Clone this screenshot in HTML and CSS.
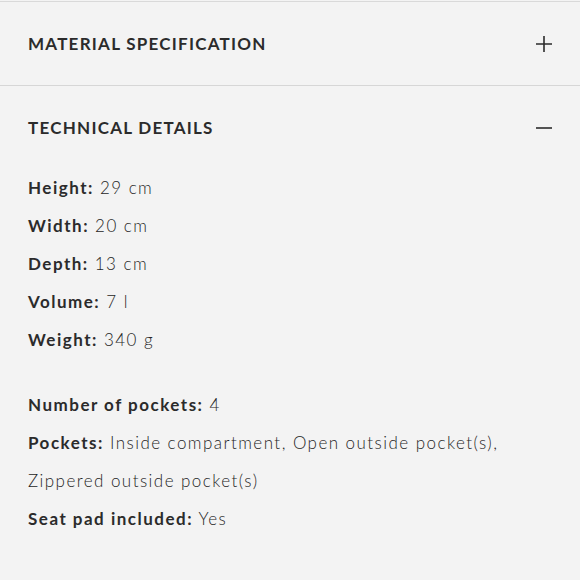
FILE: index.html
```html
<!DOCTYPE html>
<html>
<head>
<meta charset="utf-8">
<link rel="stylesheet" href="styles.css">
</head>
<body>
<div class="accordion">
  <div class="item">
    <div class="header">
      <h2 class="title">MATERIAL SPECIFICATION</h2>
      <svg class="icon" width="16" height="16" viewBox="0 0 16 16"><path d="M8 0V16M0 8H16" stroke="#2b2b2b" stroke-width="1.6" fill="none"/></svg>
    </div>
  </div>
  <div class="item open">
    <div class="header">
      <h2 class="title">TECHNICAL DETAILS</h2>
      <svg class="icon" width="16" height="16" viewBox="0 0 16 16"><path d="M0 8H16" stroke="#2b2b2b" stroke-width="1.6" fill="none"/></svg>
    </div>
    <div class="content">
      <ul class="specs">
        <li><b>Height:</b> 29 cm</li>
        <li><b>Width:</b> 20 cm</li>
        <li><b>Depth:</b> 13 cm</li>
        <li><b>Volume:</b> 7 l</li>
        <li><b>Weight:</b> 340 g</li>
      </ul>
      <ul class="specs second">
        <li><b>Number of pockets:</b> 4</li>
        <li><b>Pockets:</b> Inside compartment, Open outside pocket(s), Zippered outside pocket(s)</li>
        <li><b>Seat pad included:</b> Yes</li>
      </ul>
    </div>
  </div>
</div>
</body>
</html>
```

FILE: styles.css
```css
html, body {
  margin: 0;
  padding: 0;
  background: #f3f3f3;
}
body {
  font-family: Lato, "Liberation Sans", sans-serif;
  color: #2b2b2b;
}
.accordion {
  margin-top: 1px;
  border-top: 1px solid #d9d9d9;
}
.header {
  height: 83px;
  display: flex;
  align-items: center;
  justify-content: space-between;
  padding: 0 28px;
}
.item:first-child .header {
  border-bottom: 1px solid #d6d6d6;
}
.title {
  margin: 0;
  font-size: 17px;
  font-weight: 700;
  letter-spacing: 1.25px;
}
.icon {
  display: block;
}
.content {
  padding: 0 28px;
}
.specs {
  list-style: none;
  margin: 0;
  padding: 0;
  font-size: 17px;
  font-weight: 300;
  line-height: 38px;
  letter-spacing: 1.45px;
  max-width: 500px;
  color: #262626;
}
.specs b {
  font-weight: 700;
  letter-spacing: 1.5px;
  color: #2b2b2b;
}
.second {
  margin-top: 27px;
}
```
